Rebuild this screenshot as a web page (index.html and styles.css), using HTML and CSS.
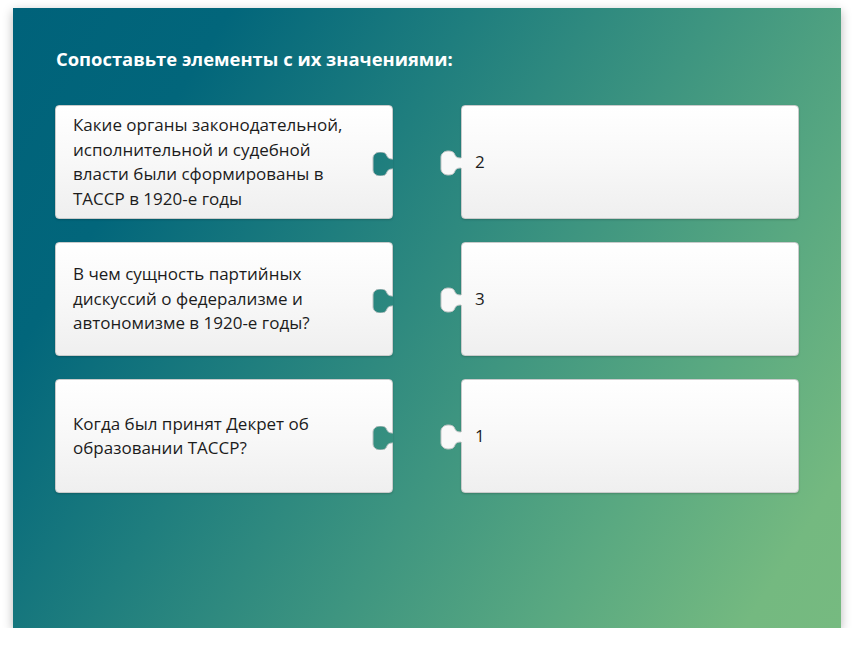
FILE: index.html
```html
<!DOCTYPE html>
<html lang="ru">
<head>
<meta charset="utf-8">
<title>Сопоставьте элементы</title>
<link rel="stylesheet" href="styles.css">
</head>
<body>
<div class="slide bgfill">
  <h1 class="title">Сопоставьте элементы с их значениями:</h1>
  <div class="grid">
    <div class="card card-q">
      <p class="text">Какие органы законодательной, исполнительной и судебной власти были сформированы в ТАССР в 1920-е годы</p>
      <div class="notch bgfill"></div>
      <svg class="notch-line" viewBox="0 0 21 24" width="21" height="24"><path d="M21,7 C17,7 16,6 15,4 C14,1 12,0 8,0 C4,0 1,3 1,6 V18 C1,21 4,24 8,24 C12,24 14,23 15,20 C16,18 17,17 21,17"/></svg>
    </div>
    <div class="card card-a">
      <svg class="knob" viewBox="0 0 22 24" width="22" height="24"><path class="knob-fill" d="M22,7 C17,7 16,6 15,4 C14,1 12,0 8,0 C4,0 1,3 1,6 V18 C1,21 4,24 8,24 C12,24 14,23 15,20 C16,18 17,17 22,17 Z"/><path class="knob-line" d="M21,7 C17,7 16,6 15,4 C14,1 12,0 8,0 C4,0 1,3 1,6 V18 C1,21 4,24 8,24 C12,24 14,23 15,20 C16,18 17,17 21,17"/></svg>
      <p class="text">2</p>
    </div>

    <div class="card card-q">
      <p class="text">В чем сущность партийных дискуссий о федерализме и автономизме в 1920-е годы?</p>
      <div class="notch bgfill"></div>
      <svg class="notch-line" viewBox="0 0 21 24" width="21" height="24"><path d="M21,7 C17,7 16,6 15,4 C14,1 12,0 8,0 C4,0 1,3 1,6 V18 C1,21 4,24 8,24 C12,24 14,23 15,20 C16,18 17,17 21,17"/></svg>
    </div>
    <div class="card card-a">
      <svg class="knob" viewBox="0 0 22 24" width="22" height="24"><path class="knob-fill" d="M22,7 C17,7 16,6 15,4 C14,1 12,0 8,0 C4,0 1,3 1,6 V18 C1,21 4,24 8,24 C12,24 14,23 15,20 C16,18 17,17 22,17 Z"/><path class="knob-line" d="M21,7 C17,7 16,6 15,4 C14,1 12,0 8,0 C4,0 1,3 1,6 V18 C1,21 4,24 8,24 C12,24 14,23 15,20 C16,18 17,17 21,17"/></svg>
      <p class="text">3</p>
    </div>

    <div class="card card-q">
      <p class="text">Когда был принят Декрет об образовании ТАССР?</p>
      <div class="notch bgfill"></div>
      <svg class="notch-line" viewBox="0 0 21 24" width="21" height="24"><path d="M21,7 C17,7 16,6 15,4 C14,1 12,0 8,0 C4,0 1,3 1,6 V18 C1,21 4,24 8,24 C12,24 14,23 15,20 C16,18 17,17 21,17"/></svg>
    </div>
    <div class="card card-a">
      <svg class="knob" viewBox="0 0 22 24" width="22" height="24"><path class="knob-fill" d="M22,7 C17,7 16,6 15,4 C14,1 12,0 8,0 C4,0 1,3 1,6 V18 C1,21 4,24 8,24 C12,24 14,23 15,20 C16,18 17,17 22,17 Z"/><path class="knob-line" d="M21,7 C17,7 16,6 15,4 C14,1 12,0 8,0 C4,0 1,3 1,6 V18 C1,21 4,24 8,24 C12,24 14,23 15,20 C16,18 17,17 21,17"/></svg>
      <p class="text">1</p>
    </div>
  </div>
</div>
</body>
</html>
```

FILE: styles.css
```css
html, body {
  margin: 0;
  padding: 0;
  background: #ffffff;
  overflow: hidden;
}

body {
  padding: 8px 0 0 13px;
  font-family: "Open Sans", "Noto Sans", sans-serif;
}

.bgfill {
  background:
    linear-gradient(122deg, #00627a 0%, #02667b 18%, #1f7e7e 38%, #3e9580 58%, #5aa981 76%, #74b980 92%, #76ba80 100%)
    13px 8px / 828px 620px no-repeat fixed;
}

.slide {
  width: 828px;
  height: 620px;
  box-sizing: border-box;
  padding: 38px 42px 0 42px;
  box-shadow: 0 3px 10px rgba(0, 0, 0, 0.28);
}

.title {
  margin: 0 0 0 1px;
  font-size: 18.4px;
  line-height: 26px;
  font-weight: 700;
  color: #ffffff;
  letter-spacing: 0;
}

.grid {
  margin-top: 33px;
  display: grid;
  grid-template-columns: 338px 338px;
  grid-auto-rows: 114px;
  column-gap: 68px;
  row-gap: 23px;
}

.card {
  position: relative;
  box-sizing: border-box;
  display: flex;
  align-items: center;
  border: 1px solid #c9cbcb;
  border-radius: 4px;
  background: linear-gradient(180deg, #ffffff 0%, #f8f8f8 50%, #efefef 100%);
  box-shadow: 0 1px 2px rgba(0, 0, 0, 0.18);
}

.text {
  margin: 0;
  font-size: 17px;
  line-height: 24.5px;
  color: #1c1c1c;
}

.card-q .text {
  width: 290px;
  padding-left: 17px;
}

.card-a .text {
  padding-left: 13px;
}

.notch {
  position: absolute;
  right: -1px;
  top: 46px;
  width: 21px;
  height: 24px;
  clip-path: path('M21,7 C17,7 16,6 15,4 C14,1 12,0 8,0 C4,0 1,3 1,6 V18 C1,21 4,24 8,24 C12,24 14,23 15,20 C16,18 17,17 21,17 Z');
}

.notch-line {
  position: absolute;
  right: -1px;
  top: 46px;
  fill: none;
  stroke: #b9c2c2;
  stroke-width: 1;
}

.knob {
  position: absolute;
  left: -22px;
  top: 45px;
  overflow: visible;
}

.knob-fill {
  fill: #f9f9f9;
}

.knob-line {
  fill: none;
  stroke: #c3c6c6;
  stroke-width: 1;
}
```
